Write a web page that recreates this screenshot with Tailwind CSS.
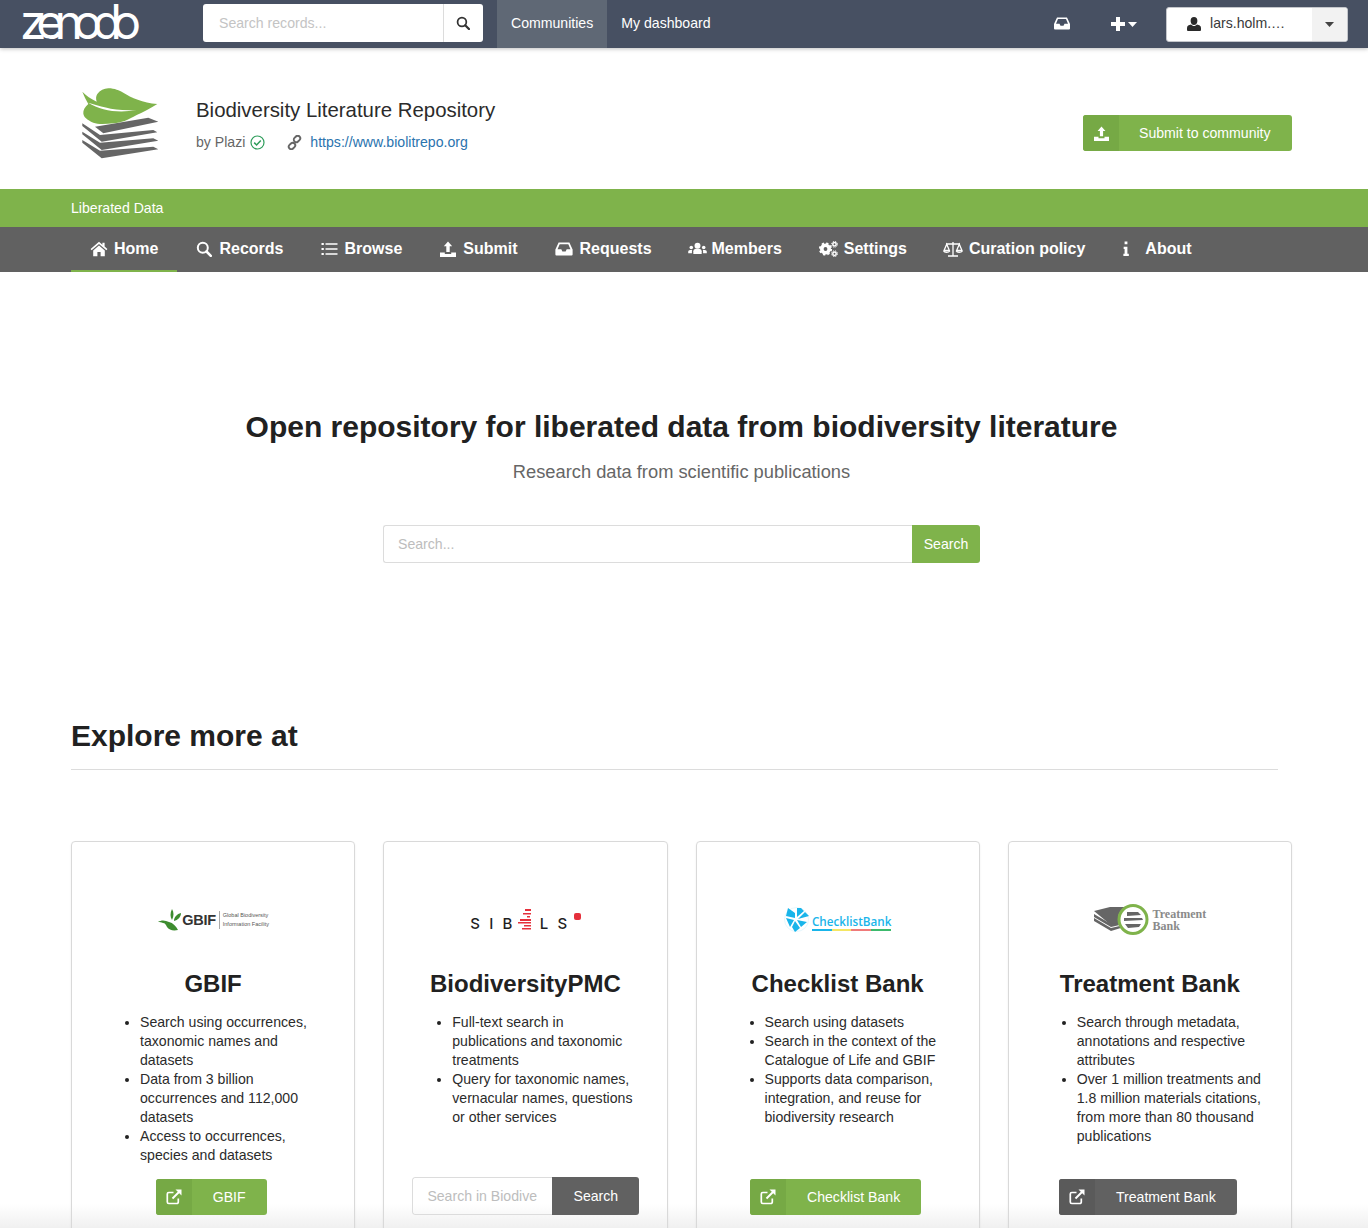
<!doctype html>
<html lang="en"><head><meta charset="utf-8"><title>Biodiversity Literature Repository</title>
<script src="https://cdn.jsdelivr.net/npm/@tailwindcss/browser@4"></script></head>
<body class="bg-white">
<svg class="absolute w-0 h-0" aria-hidden="true">
<symbol id="home" viewBox="0 0 18 16"><path fill="currentColor" d="M9 .8.6 8l1 1.2L9 2.9l7.4 6.3 1-1.2L14.6 5.6V1.800h-2.200V3.700zM9 4.500 3.200 9.400V15.200H7.400V11h3.200v4.200h4.200V9.400z"/></symbol>
<symbol id="search" viewBox="0 0 16 16"><circle cx="6.800" cy="6.800" r="5" fill="none" stroke="currentColor" stroke-width="2"/><path d="m10.500 10.500 4.300 4.300" stroke="currentColor" stroke-width="2.600" stroke-linecap="round"/></symbol>
<symbol id="list" viewBox="0 0 16 14"><path fill="currentColor" d="M0 1h2.300v2H0zM0 6h2.300v2H0zM0 11h2.300v2H0zM4 1.300h12v1.400H4zM4 6.300h12v1.400H4zM4 11.300h12v1.400H4z"/></symbol>
<symbol id="upload" viewBox="0 0 16 16"><path fill="currentColor" d="M8 .5 12.200 5.200H9.700V11H6.300V5.200H3.800zM0 11.500h4.800V13h6.400v-1.500H16V16H0z"/></symbol>
<symbol id="inbox" viewBox="0 0 16 13"><path fill="currentColor" fill-rule="evenodd" d="M3 .5h10l3 6.500v4.500a1 1 0 0 1-1 1H1a1 1 0 0 1-1-1V7zM4 2 2 6.800h3.500l1 2h3l1-2H14L12 2z"/></symbol>
<symbol id="users" viewBox="0 0 20 14"><g fill="currentColor"><circle cx="10" cy="4" r="3.200"/><path d="M5.500 13V10c0-1.800 1.500-2.800 2.800-2.800h3.400c1.300 0 2.800 1 2.800 2.800v3z"/><circle cx="3.300" cy="6" r="1.900"/><path d="M0 12V10.500C0 9.300 1 8.500 2 8.500h2.300C4.100 9 4 9.500 4 10v2z"/><circle cx="16.700" cy="6" r="1.900"/><path d="M20 12V10.500C20 9.300 19 8.500 18 8.500h-2.300c.2.500.3 1 .3 1.500v2z"/></g></symbol>
<symbol id="cogs" viewBox="0 0 19 16"><g fill="none" stroke="currentColor"><circle cx="6.500" cy="8" r="3.700" stroke-width="3.600"/><circle cx="6.500" cy="8" r="5.700" stroke-width="1.800" stroke-dasharray="2.300 2.170"/><circle cx="15.500" cy="3.300" r="1.700" stroke-width="1.500"/><circle cx="15.500" cy="12.700" r="1.700" stroke-width="1.500"/><circle cx="15.500" cy="3.300" r="2.900" stroke-width="1" stroke-dasharray="1.300 1"/><circle cx="15.500" cy="12.700" r="2.900" stroke-width="1" stroke-dasharray="1.300 1"/></g></symbol>
<symbol id="scale" viewBox="0 0 20 16"><g fill="none" stroke="currentColor" stroke-width="1.300"><path d="M10 1v13.500M5 15h10M3 3h14"/><path d="M3.700 3.200 1 9.500h5.400zM16.300 3.200 13.600 9.500H19z"/><path d="M.7 10.100c.8 1.500 4.800 1.500 6 0M13.300 10.100c.8 1.500 4.800 1.500 6 0"/></g></symbol>
<symbol id="info" viewBox="0 0 8 16"><path fill="currentColor" d="M2.500.5h3v3h-3zM1.500 6H5.500v7.500H7V16H1.200v-2.500h1.300V8.500h-1z"/></symbol>
<symbol id="ext" viewBox="0 0 16 16"><path fill="none" stroke="currentColor" stroke-width="1.700" d="M7.500 3.500H2.800a1.500 1.500 0 0 0-1.500 1.500v8a1.500 1.500 0 0 0 1.500 1.500h8a1.500 1.500 0 0 0 1.500-1.500V9.500"/><path fill="none" stroke="currentColor" stroke-width="2" d="M6.500 9.500 14 2"/><path fill="currentColor" d="M9.500 .6H15.500V6.600z"/></symbol>
<symbol id="user" viewBox="0 0 14 14"><path fill="currentColor" d="M7 0a3.400 3.900 0 0 1 3.400 3.900C10.400 6.100 8.900 8 7 8S3.600 6.100 3.600 3.900A3.400 3.900 0 0 1 7 0zM4 7.500C4.800 8.400 5.800 9 7 9s2.200-.6 3-1.500c2.200.3 4 1.400 4 3.400V13a1 1 0 0 1-1 1H1a1 1 0 0 1-1-1v-2.100c0-2 1.800-3.100 4-3.400z"/></symbol>
</svg>
<div class="relative h-[1228px] w-full overflow-hidden font-['Liberation_Sans',Arial,sans-serif] text-[14.1px] text-[#212121]">
<div class="pointer-events-none absolute right-0 bottom-0 left-0 h-[24px] bg-gradient-to-b from-transparent to-[#f0f0f0]"></div>

<header class="relative z-10 flex h-[48px] items-center bg-[#475062] text-white shadow-[0_1px_4px_rgba(0,0,0,0.25)]">
  <div class="ml-[20px] h-[48px] w-[120px] font-['Inter',sans-serif] text-[48px] leading-[44px] font-normal tracking-[-0.2em] whitespace-nowrap">zenodo</div>
  <div class="mb-[2px] ml-[63px] flex h-[38px] w-[280px] overflow-hidden rounded-[3px] bg-white">
    <div class="flex flex-1 items-center pt-[1px] pl-[16px] text-[#c4c4c4]">Search records...</div>
    <div class="flex w-[40px] items-center justify-center border-l border-[#dcdcdc] pr-[2px] text-[#333]"><svg class="h-[14px] w-[14px]"><use href="#search"/></svg></div>
  </div>
  <nav class="ml-[14px] flex h-full">
    <a class="flex items-center bg-[#5f6875] px-[14px]">Communities</a>
    <a class="flex items-center px-[14px]">My dashboard</a>
  </nav>
  <div class="ml-auto flex items-center pr-[20px]">
    <svg class="mb-[1px] h-[13px] w-[16px]"><use href="#inbox"/></svg>
    <div class="ml-[41px] flex items-center">
      <svg class="h-[14px] w-[14px]" viewBox="0 0 14 14"><path fill="currentColor" d="M5 0h4v5h5v4H9v5H5V9H0V5h5z"/></svg>
      <svg class="ml-[3px] h-[5px] w-[9px]" viewBox="0 0 9 5"><path fill="currentColor" d="M0 0h9L4.500 5z"/></svg>
    </div>
    <div class="ml-[29px] flex h-[35px] w-[182px] overflow-hidden rounded-[3px] border border-[#c4c6cb] bg-white text-[#3a3a3a]">
      <div class="flex flex-1 items-center pl-[20px]"><svg class="h-[14px] w-[14px] text-[#2a2a2a]"><use href="#user"/></svg><span class="ml-[9px]">lars.holm.…</span></div>
      <div class="flex w-[35px] items-center justify-center bg-[#f2f2f2]"><svg class="h-[5px] w-[9px] text-[#444]" viewBox="0 0 9 5"><path fill="currentColor" d="M0 0h9L4.500 5z"/></svg></div>
    </div>
  </div>
</header>

<section class="flex h-[141px] items-start pr-[76px] pl-[81px]">
  <svg class="mt-[39px] h-[72px] w-[79px]" viewBox="0 0 79 72">
    <g fill="#666">
      <path d="M14 39.700 67.300 30.700 77.300 34.700 22.300 46.300z"/>
      <path d="M1.300 36.300 19 48 72.300 43 76.300 45.300 20.700 54.700 1.300 39z"/>
      <path d="M1.300 44.700 19 55.700 72.300 51.300 77.300 53.700 20.700 63 1.300 47.300z"/>
      <path d="M1.300 53 19 63.700 72.300 59.700 77.300 62.300 20.700 71.300 1.300 55.700z"/>
    </g>
    <path fill="#7fb34b" d="M1.300 4.700C5 8.500 10 12 15.700 14.700 14.500 11 15.200 8.800 16.300 7 19 3.500 23 1.300 27.300 1.300 34 1.300 38 3.500 42.300 5.700 50 10.500 62 16 76.300 17 70 21 62 25.500 55.700 28 47 33 40 36 32.300 36.300 25 37 17 37.500 12.300 35.700 6 33 2.500 30 2.300 26.300 2 23 4 20 7.300 17 5 13 3 9 1.300 4.700z"/>
    <path fill="#fff" d="M7.300 15.700C20 19 32 24.500 55.700 23 38 26.300 20 24 7.300 15.700z"/>
  </svg>
  <div class="mt-[48px] ml-[36px]">
    <div class="text-[20.4px] leading-[28px] text-[#2b2b2b]">Biodiversity Literature Repository</div>
    <div class="mt-[8px] flex items-center leading-[20px] text-[#666]">
      <span>by Plazi</span>
      <svg class="ml-[5px] h-[15px] w-[15px] text-[#2e9d5b]" viewBox="0 0 15 15"><circle cx="7.500" cy="7.500" r="6.500" fill="none" stroke="currentColor" stroke-width="1.200"/><path fill="none" stroke="currentColor" stroke-width="1.500" d="m4.200 7.600 2.400 2.400 4.200-4.500"/></svg>
      <svg class="ml-[22px] h-[15px] w-[15px] text-[#666]" viewBox="0 0 15 15"><g fill="none" stroke="currentColor" stroke-width="1.900"><rect x="6.500" y="1.500" width="7" height="5" rx="2.500" transform="rotate(-45 10 4)"/><rect x="1.500" y="8.500" width="7" height="5" rx="2.500" transform="rotate(-45 5 11)"/></g></svg>
      <a class="ml-[8px] text-[#2a73ae]">https://www.biolitrepo.org</a>
    </div>
  </div>
  <a class="mt-[67px] ml-auto flex h-[36px] w-[209px] overflow-hidden rounded-[3px] bg-[#7fb34b] text-white">
    <span class="flex w-[36px] items-center justify-center bg-[#76a945]"><svg class="h-[15px] w-[15px]"><use href="#upload"/></svg></span>
    <span class="flex items-center pt-[2px] pl-[20px]">Submit to community</span>
  </a>
</section>

<div class="flex h-[38px] items-center bg-[#7fb34b] pt-[2px] pl-[71px] text-white">Liberated Data</div>
<nav class="flex h-[45px] bg-[#616161] pl-[71px] text-[16px] font-bold text-white">
  <a class="flex items-center gap-[6px] border-b-[2px] border-[#7fb34b] px-[19px]"><svg class="h-[16px] w-[18px]"><use href="#home"/></svg>Home</a>
  <a class="flex items-center gap-[7px] px-[19px] pb-[2px]"><svg class="h-[16px] w-[16px]"><use href="#search"/></svg>Records</a>
  <a class="flex items-center gap-[6px] px-[19px] pb-[2px]"><svg class="h-[14px] w-[17px]"><use href="#list"/></svg>Browse</a>
  <a class="flex items-center gap-[7px] px-[19px] pb-[2px]"><svg class="h-[16px] w-[16px]"><use href="#upload"/></svg>Submit</a>
  <a class="flex items-center gap-[7px] pr-[17px] pb-[2px] pl-[18px]"><svg class="h-[14px] w-[18px]"><use href="#inbox"/></svg>Requests</a>
  <a class="flex items-center gap-[5px] px-[19px] pb-[2px]"><svg class="h-[13px] w-[19px]"><use href="#users"/></svg>Members</a>
  <a class="flex items-center gap-[6px] px-[18px] pb-[2px]"><svg class="h-[16px] w-[19px]"><use href="#cogs"/></svg>Settings</a>
  <a class="flex items-center gap-[6px] px-[18px] pb-[2px]"><svg class="h-[16px] w-[20px]"><use href="#scale"/></svg>Curation policy</a>
  <a class="flex items-center gap-[15px] px-[19px] pb-[2px]"><svg class="h-[15px] w-[8px]"><use href="#info"/></svg>About</a>
</nav>

<main class="relative ml-[71px] w-[1221px]">
  <h1 class="pt-[135px] text-center text-[30px] leading-[40px] font-bold">Open repository for liberated data from biodiversity literature</h1>
  <p class="mt-[12px] text-center text-[18.3px] leading-[26px] text-[#666]">Research data from scientific publications</p>
  <form class="mx-auto mt-[40px] flex h-[38px] w-[597px]">
    <div class="flex flex-1 items-center rounded-l-[3px] border border-r-0 border-[#dcdcdc] pt-[2px] pl-[14px] text-[#bdbdbd]">Search...</div>
    <div class="flex w-[68px] items-center justify-center rounded-r-[3px] bg-[#7fb34b] pt-[1px] text-white">Search</div>
  </form>
  <h2 class="mt-[153px] text-[30px] leading-[40px] font-bold">Explore more at</h2>
  <hr class="mt-[13px] w-[1207px] border-[#dcdcdc]">
  <div class="mt-[71px] grid h-[440px] grid-cols-4 gap-[28px]">

    <article class="flex flex-col rounded-[4px] border border-[#d9d9d9] shadow-[0_1px_2px_rgba(0,0,0,0.08)]">
      <div class="mt-[62px] flex h-[32px] items-center justify-center pl-[1px]">
        <svg class="h-[24px] w-[24px]" viewBox="0 0 24 24"><path fill="#3d8c2f" d="M14 1c2 3 2 7 0 11-2-3-2-7 0-11zM23 5c0 4-3 7-7 8 0-4 3-7 7-8zM0 14c3-2 7-2 11 0 4 1 7 4 9 8-5 1-9 0-11-3-1-2-2-4-4-4-2-1-3-1-5-1z"/></svg>
        <span class="text-[14.5px] leading-none font-bold tracking-[-0.02em] text-[#333]">GBIF</span>
        <span class="ml-[3px] border-l border-[#aaa] pl-[3px] text-[5.5px] leading-[9px] text-[#555]">Global Biodiversity<br>Information Facility</span>
      </div>
      <h3 class="mt-[32px] text-center text-[24px] leading-[32px] font-bold">GBIF</h3>
      <ul class="mt-[13px] flex-1 list-disc pr-[28px] pl-[68px] leading-[19px] text-[#2b2b2b] marker:text-[#222]">
        <li>Search using occurrences, taxonomic names and datasets</li>
        <li>Data from 3 billion occurrences and 112,000 datasets</li>
        <li>Access to occurrences, species and datasets</li>
      </ul>
      <div class="mb-[65px] flex justify-center pr-[4px]"><a class="flex h-[36px] overflow-hidden rounded-[3px] bg-[#7fb34b] text-white"><span class="flex w-[36px] items-center justify-center bg-[#76a945]"><svg class="h-[16px] w-[16px]"><use href="#ext"/></svg></span><span class="flex items-center px-[21px] pt-[2px]">GBIF</span></a></div>
    </article>

    <article class="flex flex-col rounded-[4px] border border-[#d9d9d9] shadow-[0_1px_2px_rgba(0,0,0,0.08)]">
      <div class="mt-[62px] flex h-[32px] items-center justify-center pt-[7px]">
        <span class="font-['Inter',sans-serif] text-[15px] leading-none font-medium tracking-[0.62em] text-[#1f1f1f]">SIB</span>
        <svg class="mt-[-7px] mr-[8px] ml-[-4px] h-[22px] w-[14px]" viewBox="0 0 14 22"><g fill="#e5303c"><rect x="7" y="0" width="6" height="2"/><rect x="5" y="4" width="8" height="1.500"/><rect x="9" y="7" width="3" height="1.500"/><rect x="2" y="10" width="11" height="2"/><rect x="0" y="13" width="13" height="1.500"/><rect x="6" y="16" width="7" height="1.500"/><rect x="4" y="19" width="9" height="1.500"/></g></svg>
        <span class="font-['Inter',sans-serif] text-[15px] leading-none font-medium tracking-[0.62em] text-[#1f1f1f]">LS</span>
        <span class="mt-[-15px] ml-[-3px] h-[7px] w-[7px] rounded-[2px] bg-[#e5303c]"></span>
      </div>
      <h3 class="mt-[32px] text-center text-[24px] leading-[32px] font-bold">BiodiversityPMC</h3>
      <ul class="mt-[13px] flex-1 list-disc pr-[28px] pl-[68px] leading-[19px] text-[#2b2b2b] marker:text-[#222]">
        <li>Full-text search in publications and taxonomic treatments</li>
        <li>Query for taxonomic names, vernacular names, questions or other services</li>
      </ul>
      <div class="mb-[65px] flex justify-center pl-[1px]">
        <div class="flex h-[38px] w-[227px] overflow-hidden rounded-[3px]"><div class="flex flex-1 items-center overflow-hidden rounded-l-[3px] border border-r-0 border-[#dcdcdc] pt-[2px] pl-[14px] whitespace-nowrap text-[#bdbdbd]">Search in Biodive</div><div class="flex w-[87px] items-center justify-center bg-[#616161] pt-[1px] text-white">Search</div></div>
      </div>
    </article>

    <article class="flex flex-col rounded-[4px] border border-[#d9d9d9] shadow-[0_1px_2px_rgba(0,0,0,0.08)]">
      <div class="mt-[62px] flex h-[32px] items-center justify-center">
        <svg class="mb-[1px] h-[25px] w-[25px]" viewBox="0 0 25 25"><circle cx="12.500" cy="12.500" r="12" fill="none" stroke="#d5f1fb" stroke-width=".6"/><path fill="#19b5ea" d="M4 1 11 6 11 11 2 9zM13 1 17 1 20 4 13 10zM21 5 25 9 14 12zM2 11 10 13 6 20zM13 13 23 15 17 20zM11 14 16 21 11 25 8 20z"/></svg>
        <span class="mt-[5px] ml-[3px] bg-[linear-gradient(90deg,#19b5ea_25%,#f5e663_25%,#f5e663_50%,#f07a7a_50%,#f07a7a_75%,#3cba6d_75%)] bg-[length:100%_2px] bg-bottom bg-no-repeat pb-[3px] font-['Open_Sans',sans-serif] text-[11.7px] leading-[14px] font-semibold text-[#19b5ea]">ChecklistBank</span>
      </div>
      <h3 class="mt-[32px] text-center text-[24px] leading-[32px] font-bold">Checklist Bank</h3>
      <ul class="mt-[13px] flex-1 list-disc pr-[28px] pl-[68px] leading-[19px] text-[#2b2b2b] marker:text-[#222]">
        <li>Search using datasets</li>
        <li>Search in the context of the Catalogue of Life and GBIF</li>
        <li>Supports data comparison, integration, and reuse for biodiversity research</li>
      </ul>
      <div class="mb-[65px] flex justify-center pr-[4px]"><a class="flex h-[36px] overflow-hidden rounded-[3px] bg-[#7fb34b] text-white"><span class="flex w-[36px] items-center justify-center bg-[#76a945]"><svg class="h-[16px] w-[16px]"><use href="#ext"/></svg></span><span class="flex items-center px-[21px] pt-[2px]">Checklist Bank</span></a></div>
    </article>

    <article class="flex flex-col rounded-[4px] border border-[#d9d9d9] shadow-[0_1px_2px_rgba(0,0,0,0.08)]">
      <div class="mt-[62px] flex h-[32px] items-center justify-center">
        <svg class="h-[32px] w-[55px]" viewBox="0 0 55 32"><g fill="#666"><path d="M0 7 16 3 30 3 30 19 18 22z"/><path d="M0 10 17 20 30 18 30 20 17 23 0 13zM0 14 17 24 30 21 30 23 17 27 0 17z"/></g><circle cx="39" cy="15.500" r="15" fill="#fff"/><circle cx="39" cy="15.500" r="14" fill="none" stroke="#7fb34b" stroke-width="3"/><g fill="#666"><path d="M33 8h11l3 3-14 1zM30 14h18l1 2-19 1zM31 20h16l-2 3-11 1z"/></g></svg>
        <span class="ml-[4px] font-['Liberation_Serif',serif] text-[12px] leading-[12px] font-bold text-[#8a8a8a]">Treatment<br>Bank</span>
      </div>
      <h3 class="mt-[32px] text-center text-[24px] leading-[32px] font-bold">Treatment Bank</h3>
      <ul class="mt-[13px] flex-1 list-disc pr-[28px] pl-[68px] leading-[19px] text-[#2b2b2b] marker:text-[#222]">
        <li>Search through metadata, annotations and respective attributes</li>
        <li>Over 1 million treatments and 1.8 million materials citations, from more than 80 thousand publications</li>
      </ul>
      <div class="mb-[65px] flex justify-center pr-[4px]"><a class="flex h-[36px] overflow-hidden rounded-[3px] bg-[#616161] text-white"><span class="flex w-[36px] items-center justify-center bg-[#5a5a5a]"><svg class="h-[16px] w-[16px]"><use href="#ext"/></svg></span><span class="flex items-center px-[21px] pt-[2px]">Treatment Bank</span></a></div>
    </article>
  </div>
</main>
</div>
</body></html>
